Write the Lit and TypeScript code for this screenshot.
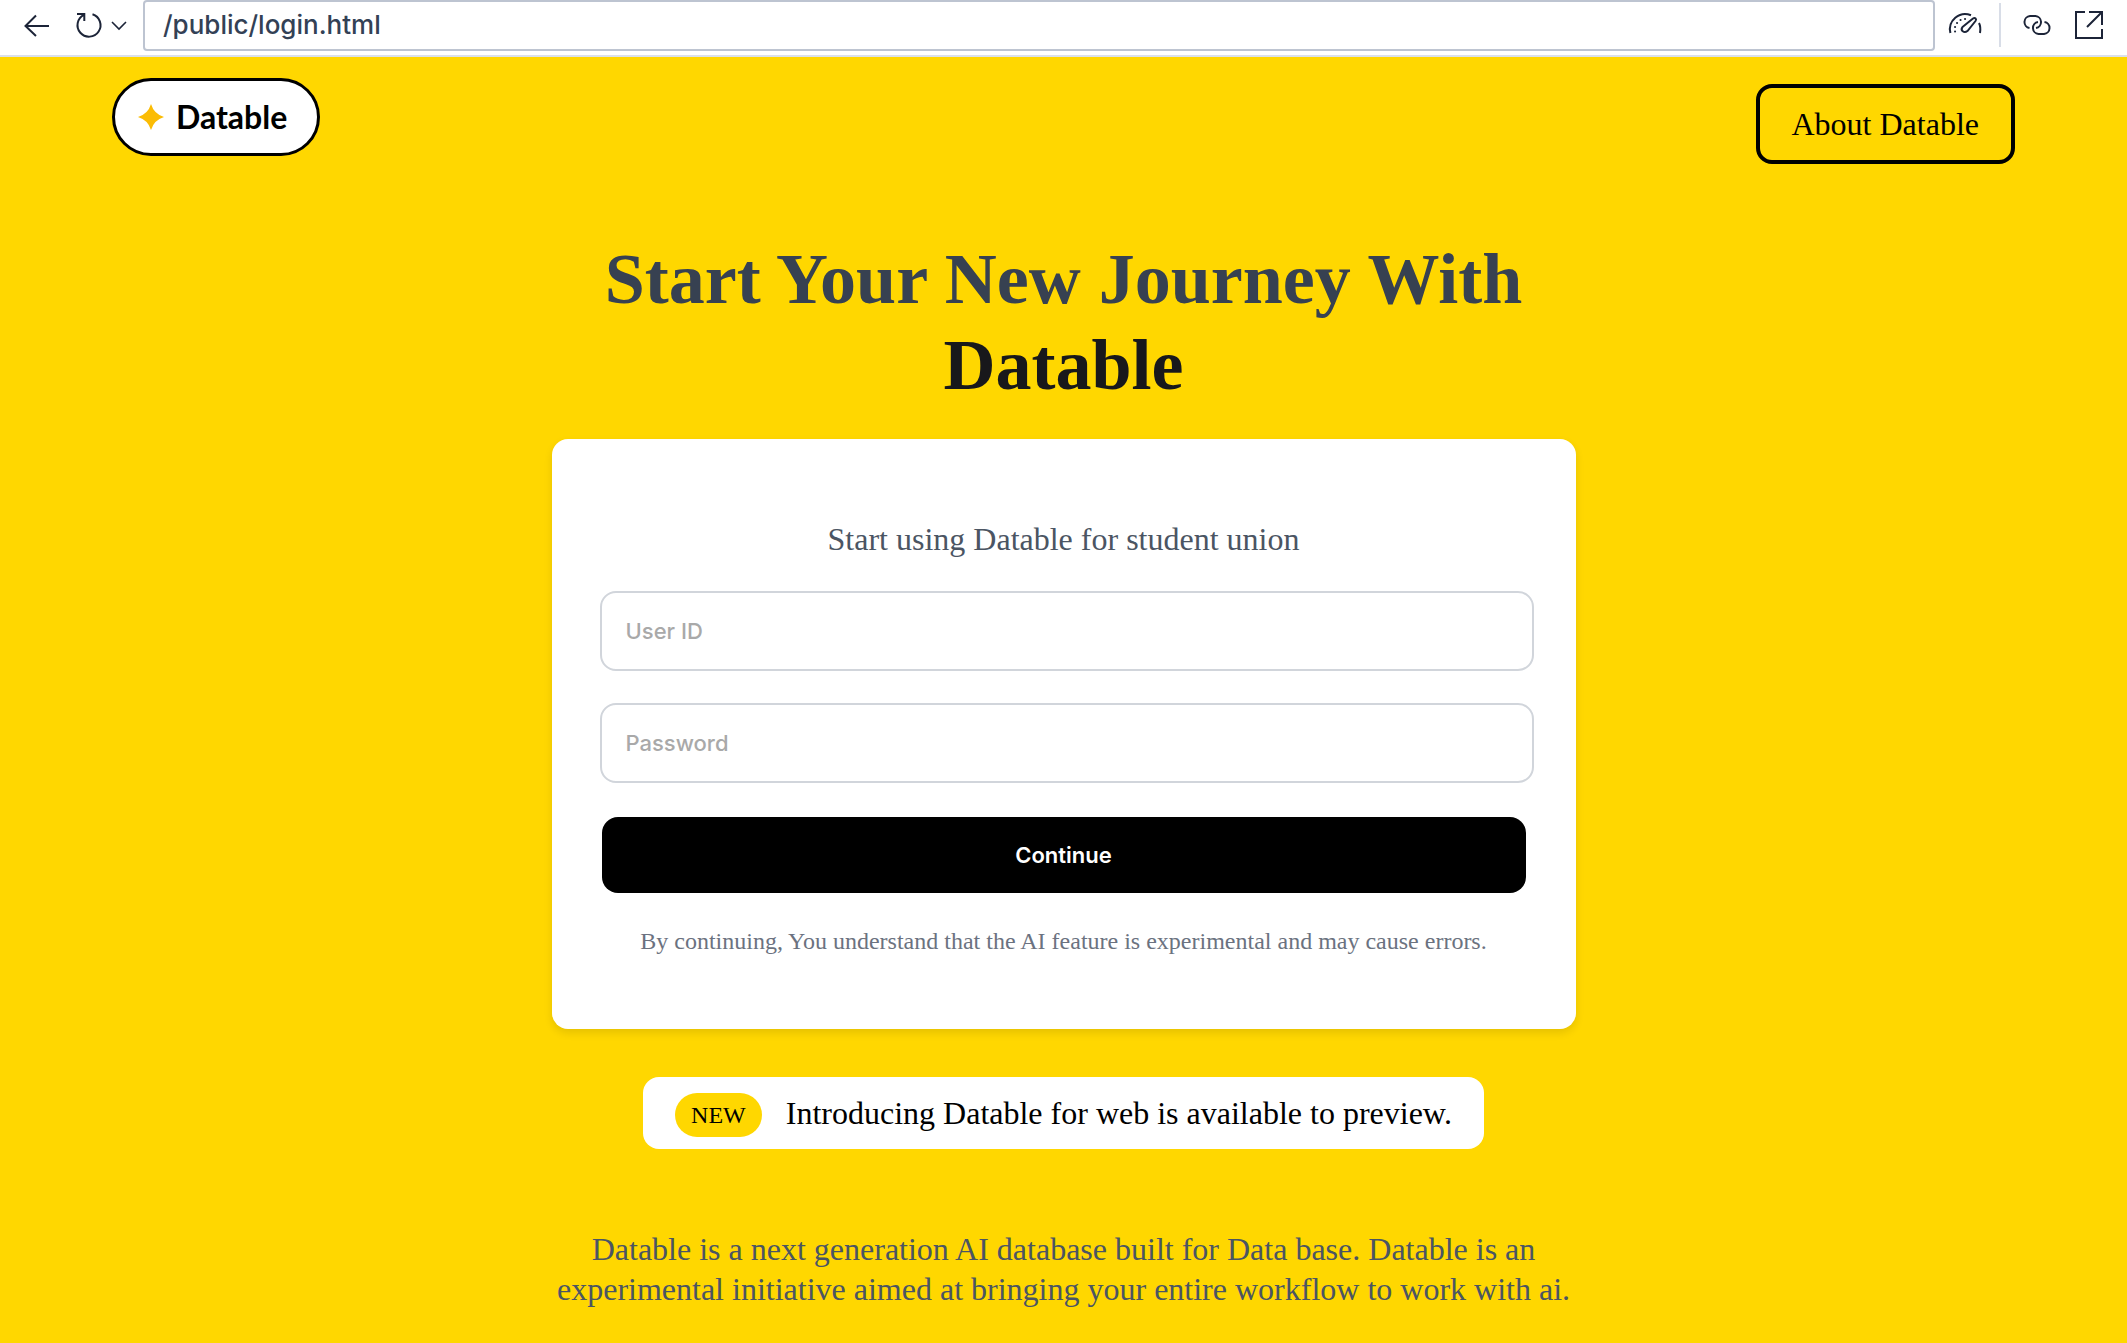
import { LitElement, html, css } from "lit";
import { customElement } from "lit/decorators.js";

@customElement("browser-bar")
class BrowserBar extends LitElement {
  static styles = css`
    :host {
      display: block;
    }
    .bar {
      display: flex;
      align-items: flex-start;
      height: 55px;
      padding: 0 18px 0 12px;
      background: #fff;
      border-bottom: 2px solid #dbe0ea;
      box-sizing: content-box;
    }
    button {
      display: flex;
      align-items: center;
      justify-content: center;
      height: 50px;
      padding: 0;
      border: 0;
      background: none;
      color: #1c2438;
    }
    svg {
      display: block;
      fill: none;
      stroke: currentColor;
      stroke-width: 2;
    }
    .address {
      flex: 1;
      min-width: 0;
      height: 51px;
      margin: 0 10px 0 12px;
      padding: 0 18px 2px;
      box-sizing: border-box;
      border: 2px solid #bdc4d1;
      border-radius: 4px;
      background: #fff;
      color: #334155;
      font: 500 26px/44px Inter, sans-serif;
      outline: none;
    }
    .divider {
      width: 2px;
      height: 44px;
      margin: 3px 16px 0 14px;
      background: #d8dde7;
    }
    .tools {
      display: flex;
      gap: 12px;
    }
  `;

  render() {
    return html`
      <div class="bar">
        <button aria-label="Back">
          <svg width="50" height="50" viewBox="12 0 50 50">
            <path d="M49 26H26M36 15.5L25.5 26L36 36" />
          </svg>
        </button>
        <button aria-label="Reload">
          <svg width="46" height="50" viewBox="62 0 46 50">
            <path d="M92.500 14.2A11.5 11.5 0 1 1 84 14.800M77 14H84.3V21" />
          </svg>
        </button>
        <button aria-label="Reload options">
          <svg width="23" height="50" viewBox="108 0 23 50">
            <path d="M112 22L119 29L126 22" stroke-width="1.6" />
          </svg>
        </button>
        <input class="address" type="text" aria-label="Address" value="/public/login.html" />
        <button aria-label="Performance">
          <svg width="40" height="50" viewBox="1945 0 40 50">
            <path d="M1950.400 33A15.300 15.300 0 0 1 1971 15.200M1979 23C1980.500 26 1980.500 30 1980 33" />
            <path d="M1962.500 27L1973 18.500C1975 17 1977 19 1975.500 21L1967.500 31C1964 33.500 1960 30.500 1962.500 27Z" />
            <path d="M1955 31.500h.1M1955 27h.1M1957 23h.1M1960.500 20h.1M1965 19h.1" stroke-linecap="round" />
          </svg>
        </button>
        <div class="divider"></div>
        <div class="tools">
          <button aria-label="Copy link">
            <svg width="40" height="50" viewBox="2017 0 40 50">
              <path d="M2029.500 27.900A6 6 0 0 1 2030 16H2035.500A6 6 0 0 1 2036 27.900" />
              <path d="M2044.500 22.100A6 6 0 0 1 2044 34H2038.500A6 6 0 0 1 2038 22.100" />
            </svg>
          </button>
          <button aria-label="Open in new tab">
            <svg width="40" height="50" viewBox="2069 0 40 50">
              <path d="M2085 12H2076V38H2102V29M2089 12H2102V25M2102 12L2087 27" />
            </svg>
          </button>
        </div>
      </div>
    `;
  }
}

@customElement("login-card")
class LoginCard extends LitElement {
  static styles = css`
    :host {
      display: block;
    }
    .card {
      box-sizing: border-box;
      padding: 80px 42px 72px 48px;
      border-radius: 16px;
      background: #fff;
      box-shadow: 0 4px 8px rgba(0, 0, 0, 0.1);
      display: flex;
      flex-direction: column;
      gap: 32px;
    }
    .lead {
      margin: 0 6px 0 0;
      text-align: center;
      color: #4b5563;
      font-size: 32px;
      line-height: 40px;
    }
    .field,
    .submit {
      display: block;
      box-sizing: border-box;
      height: 80px;
      border-radius: 16px;
      font: 500 22px/28px Inter, sans-serif;
    }
    .field {
      width: 100%;
      padding: 0 24px;
      border: 2px solid #d1d5db;
      background: #fff;
      color: #111827;
      outline: none;
    }
    .field::placeholder {
      color: #a9a9a9;
      opacity: 1;
    }
    .submit {
      height: 76px;
      margin: 2px 8px 0 2px;
      border: 0;
      background: #000;
      color: #fff;
      font-weight: 600;
    }
    .note {
      margin: 0 6px 0 0;
      text-align: center;
      color: #6b7280;
      font-size: 24px;
      line-height: 32px;
    }
  `;

  render() {
    return html`
      <form class="card" @submit=${(e: Event) => e.preventDefault()}>
        <p class="lead">Start using Datable for student union</p>
        <input class="field" type="text" aria-label="User ID" placeholder="User ID" />
        <input class="field" type="password" aria-label="Password" placeholder="Password" />
        <button class="submit" type="submit">Continue</button>
        <p class="note">
          By continuing, You understand that the AI feature is experimental and may cause errors.
        </p>
      </form>
    `;
  }
}

@customElement("app-root")
class AppRoot extends LitElement {
  static styles = css`
    :host {
      display: flex;
      flex-direction: column;
      min-height: 100vh;
      background: #ffd700;
      font-family: "Liberation Serif", serif;
    }
    .nav {
      display: flex;
      justify-content: space-between;
      align-items: flex-start;
      padding: 21px 112px 0;
    }
    .logo {
      display: flex;
      align-items: center;
      gap: 12px;
      box-sizing: border-box;
      height: 78px;
      padding: 0 30px 0 23px;
      border: 3px solid #000;
      border-radius: 39px;
      background: #fff;
      color: #000;
      text-decoration: none;
      font: 700 32px/40px Lato, sans-serif;
    }
    .star {
      display: block;
      fill: #fbbc04;
    }
    .about {
      margin-top: 6px;
      padding: 16px 32px;
      border: 4px solid #000;
      border-radius: 16px;
      color: #000;
      text-decoration: none;
      font-size: 32px;
      line-height: 40px;
    }
    .main {
      display: flex;
      flex-direction: column;
      align-items: center;
      width: 100%;
      max-width: 1024px;
      margin: 72px auto 0;
    }
    .title {
      margin: 0 0 31px;
      text-align: center;
      color: #374151;
      font-size: 72px;
      line-height: 86px;
      font-weight: 700;
    }
    .brand {
      display: block;
      color: #18181b;
    }
    .login {
      align-self: stretch;
    }
    .banner {
      display: flex;
      align-items: center;
      gap: 24px;
      box-sizing: border-box;
      height: 72px;
      margin: 48px 0 72px;
      padding: 0 32px;
      border-radius: 16px;
      background: #fff;
      font-size: 32px;
      line-height: 40px;
    }
    .badge {
      margin-top: 4px;
      padding: 6px 16px;
      border-radius: 22px;
      background: #ffd700;
      font-size: 24px;
      line-height: 32px;
    }
    .about-text {
      margin: 8px 0;
      text-align: center;
      color: #4b5563;
      font-size: 32px;
      line-height: 40px;
    }
  `;

  render() {
    return html`
      <browser-bar></browser-bar>
      <header class="nav">
        <a class="logo" href="#">
          <svg class="star" width="26" height="26" viewBox="0 0 26 26">
            <path d="M13 0Q16 10 26 13Q16 16 13 26Q10 16 0 13Q10 10 13 0Z" />
          </svg>
          <span>Datable</span>
        </a>
        <a class="about" href="#">About Datable</a>
      </header>
      <main class="main">
        <h1 class="title">Start Your New Journey With <span class="brand">Datable</span></h1>
        <login-card class="login"></login-card>
        <div class="banner">
          <span class="badge">NEW</span>
          <span>Introducing Datable for web is available to preview.</span>
        </div>
        <p class="about-text">
          Datable is a next generation AI database built for Data base. Datable is an experimental
          initiative aimed at bringing your entire workflow to work with ai.
        </p>
      </main>
    `;
  }
}
